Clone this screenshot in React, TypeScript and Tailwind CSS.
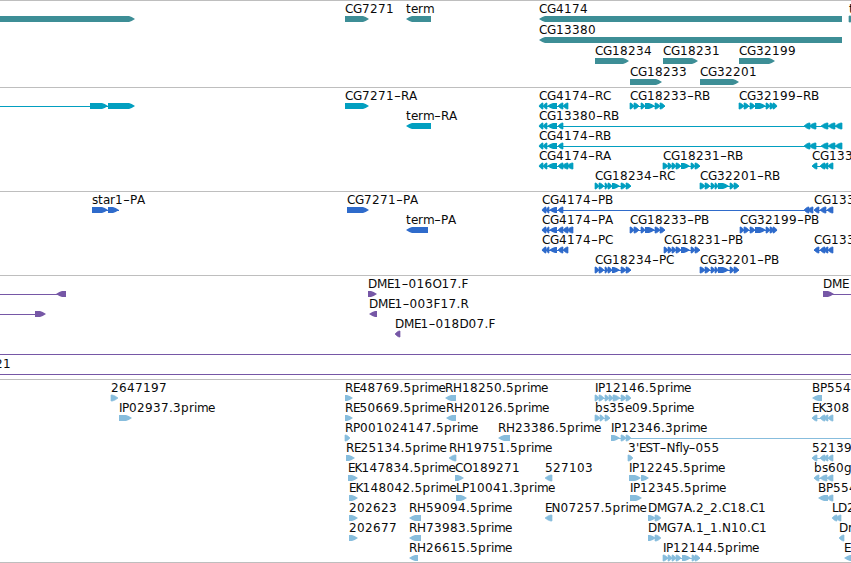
type Exon = [start: number, end: number];

type Feature = {
  row: number;
  exons: Exon[];
  dir: "left" | "right";
  label?: string;
  labelX?: number;
  // intron line, when the feature is more than a single block
  line?: Exon;
};

type Track = {
  name: string;
  color: string;
  height: number;
  rowHeight: number;
  features: Feature[];
};

const WIDTH = 851;

// Glyph advances for the 12px label font
const ADVANCE: Record<string, number> = {
  C: 8, G: 9, R: 8, B: 8, A: 8, P: 7, D: 9, M: 10, E: 6.6, F: 7, H: 9, I: 3,
  K: 7, L: 6, N: 9, O: 9, S: 7, T: 7, "-": 7, ".": 4, "'": 3, _: 6,
  s: 6, t: 5, a: 7, r: 5, e: 7, m: 11, p: 8, i: 3, f: 4, l: 3, y: 6, b: 8, g: 8,
};

type Run = { text: string; positions: string };

// Hyphens get a run of their own, so that they can be stretched over their cell
function splitRuns(label: string, x: number): Run[] {
  const runs: Run[] = [];
  let pen = x;
  for (const part of label.split(/(-)/)) {
    const positions: number[] = [];
    for (const char of part) {
      positions.push(pen);
      pen += ADVANCE[char] ?? 8;
    }
    runs.push({ text: part, positions: positions.join(" ") });
  }
  return runs;
}

function right(row: number, exons: Exon[], label?: string, line?: Exon): Feature {
  return { row, exons, dir: "right", label, line };
}

function left(row: number, exons: Exon[], label?: string, line?: Exon): Feature {
  return { row, exons, dir: "left", label, line };
}

const cg18233: Exon[] = [[630, 634], [634, 639], [641, 645], [645, 655], [655, 660], [660, 665]];
const cg18234: Exon[] = [[595, 599], [599, 604], [605, 608], [608, 612], [612, 620], [621, 626], [626, 631]];
const cg18231: Exon[] = [[663, 668], [668, 672], [672, 676], [676, 681], [681, 690], [691, 695], [695, 700]];
const cg32201: Exon[] = [[700, 705], [705, 710], [711, 715], [715, 718], [718, 729], [730, 734], [734, 739]];
const cg32199: Exon[] = [[739, 744], [744, 749], [750, 755], [755, 766], [766, 770], [770, 774], [773, 777]];
const cg4174Start: Exon[] = [[539, 543], [543, 547], [547, 557], [558, 563]];
const cg4174End: Exon[] = [[804, 810], [809, 816], [821, 828], [828, 835], [835, 842]];
const cg4174Protein: Exon[] = [[542, 546], [546, 549], [549, 557], [558, 563]];
const cg13380End: Exon[] = [[812, 817], [820, 825], [824, 828], [828, 833]];

const tracks: Track[] = [
  {
    name: "genes",
    color: "#3d8e96",
    height: 87,
    rowHeight: 21,
    features: [
      right(0, [[-10, 135]]),
      right(0, [[345, 369]], "CG7271"),
      left(0, [[406, 431]], "term"),
      left(0, [[539, 842]], "CG4174"),
      right(0, [[849, 856]], "t"),
      left(1, [[539, 842]], "CG13380"),
      right(2, [[595, 629]], "CG18234"),
      right(2, [[663, 698]], "CG18231"),
      right(2, [[739, 775]], "CG32199"),
      right(3, [[630, 662]], "CG18233"),
      right(3, [[700, 739]], "CG32201"),
    ],
  },
  {
    name: "transcripts",
    color: "#029fc0",
    height: 104,
    rowHeight: 20,
    features: [
      right(0, [[90, 108], [108, 135]], undefined, [0, 110]),
      right(0, [[345, 369]], "CG7271-RA"),
      left(1, [[406, 431]], "term-RA"),
      left(0, [...cg4174Start, [563, 568]], "CG4174-RC", [539, 568]),
      right(0, cg18233, "CG18233-RB", [630, 665]),
      right(0, cg32199, "CG32199-RB", [739, 777]),
      left(1, [...cg4174Start, ...cg4174End], "CG13380-RB", [539, 842]),
      left(2, [...cg4174Start, ...cg4174End], "CG4174-RB", [539, 842]),
      left(3, [...cg4174Start, [562, 568], [567, 573]], "CG4174-RA", [539, 573]),
      right(3, cg18231, "CG18231-RB", [663, 700]),
      left(3, cg13380End, "CG133", [812, 833]),
      right(4, cg18234, "CG18234-RC", [595, 631]),
      right(4, cg32201, "CG32201-RB", [700, 739]),
    ],
  },
  {
    name: "proteins",
    color: "#2f6bcb",
    height: 84,
    rowHeight: 20,
    features: [
      right(0, [[92, 108], [108, 119]], "star1-PA", [92, 119]),
      right(0, [[347, 369]], "CG7271-PA"),
      left(1, [[406, 428]], "term-PA"),
      left(0, [...cg4174Protein, [804, 809], [808, 813]], "CG4174-PB", [542, 813]),
      left(0, [[814, 819], [820, 826], [827, 833]], "CG133", [814, 833]),
      left(1, [...cg4174Protein, [563, 568], [567, 573]], "CG4174-PA", [542, 573]),
      right(1, cg18233, "CG18233-PB", [630, 665]),
      right(1, [[740, 744], ...cg32199.slice(1)], "CG32199-PB", [740, 777]),
      left(2, [...cg4174Protein, [563, 568]], "CG4174-PC", [542, 568]),
      right(2, [[664, 668], ...cg18231.slice(1)], "CG18231-PB", [664, 700]),
      left(2, [[814, 819], [820, 825], [824, 828], [828, 833]], "CG133", [814, 833]),
      right(3, cg18234, "CG18234-PC", [595, 631]),
      right(3, cg32201, "CG32201-PB", [700, 739]),
    ],
  },
  {
    name: "clones",
    color: "#7657a6",
    height: 104,
    rowHeight: 20,
    features: [
      left(0, [[56, 66]], undefined, [0, 60]),
      right(1, [[35, 46]], undefined, [0, 40]),
      right(0, [[368, 377]], "DME1-016O17.F"),
      left(1, [[369, 377]], "DME1-003F17.R"),
      left(2, [[395, 400]], "DME1-018D07.F"),
      right(0, [[823, 834]], "DME", [823, 851]),
      right(3, [], undefined, [0, 851]),
      { row: 4, exons: [], dir: "right", label: "21", labelX: -5, line: [0, 851] },
    ],
  },
  {
    name: "ests",
    color: "#87bddd",
    height: 183,
    rowHeight: 20,
    features: [
      right(0, [[111, 118]], "2647197"),
      right(1, [[119, 132]], "IP02937.3prime"),
      right(0, [[345, 353]], "RE48769.5prime"),
      right(1, [[345, 353]], "RE50669.5prime"),
      right(2, [[345, 350]], "RP001024147.5prime"),
      right(3, [[346, 355]], "RE25134.5prime"),
      right(4, [[348, 358]], "EK147834.5prime"),
      right(5, [[349, 358]], "EK148042.5prime"),
      right(6, [[349, 358]], "202623"),
      right(7, [[349, 358]], "202677"),
      left(0, [[445, 456]], "RH18250.5prime"),
      left(1, [[446, 456]], "RH20126.5prime"),
      left(2, [[498, 510]], "RH23386.5prime"),
      left(3, [[449, 456]], "RH19751.5prime"),
      right(4, [[455, 464]], "CO189271"),
      right(5, [[456, 467]], "LP10041.3prime"),
      left(6, [[409, 421]], "RH59094.5prime"),
      left(7, [[409, 421]], "RH73983.5prime"),
      left(8, [[409, 418]], "RH26615.5prime"),
      left(4, [[545, 552]], "527103"),
      left(6, [[545, 552]], "EN07257.5prime"),
      right(0, [[595, 599], [599, 604], [605, 609], [609, 613], [613, 620], [621, 626], [626, 631]], "IP12146.5prime", [595, 631]),
      right(1, [[595, 600], [600, 604], [605, 610]], "bs35e09.5prime", [595, 610]),
      right(2, [[611, 620], [621, 626], [626, 631]], "IP12346.3prime", [611, 851]),
      right(3, [[628, 633]], "3'EST-Nfly-055"),
      right(4, [[629, 641], [641, 649]], "IP12245.5prime"),
      right(5, [[630, 642]], "IP12345.5prime"),
      right(6, [[648, 656], [655, 661]], "DMG7A.2_2.C18.C1"),
      right(7, [[648, 656], [655, 661]], "DMG7A.1_1.N10.C1"),
      right(8, [[663, 668], [668, 672], [672, 676], [676, 681], [682, 691], [692, 696], [695, 700]], "IP12144.5prime", [663, 700]),
      left(0, [[812, 822]], "BP554"),
      left(1, [[812, 817], [820, 825], [824, 828], [828, 833]], "EK308", [812, 833]),
      left(3, [[812, 817], [820, 825], [824, 828], [828, 833]], "52139", [812, 833]),
      left(4, [[814, 819], [820, 827], [827, 833]], "bs60g", [814, 833]),
      left(5, [[818, 828], [827, 833]], "BP554"),
      left(6, [[832, 837], [836, 841]], "LD2"),
      left(7, [[839, 844]], "Dr"),
      left(8, [[844, 856]], "E"),
    ],
  },
];

function exonPoints([start, end]: Exon, dir: Feature["dir"], top: number) {
  const head = Math.min(6, (end - start) * 0.8);
  const neck = head * 0.55;
  const bottom = top + 6;
  const mid = top + 3;
  if (dir === "right") {
    return `${start},${top} ${end - head},${top} ${end - neck},${top + 0.9} ${end},${mid} ${end - neck},${bottom - 0.9} ${end - head},${bottom} ${start},${bottom}`;
  }
  return `${end},${top} ${start + head},${top} ${start + neck},${top + 0.9} ${start},${mid} ${start + neck},${bottom - 0.9} ${start + head},${bottom} ${end},${bottom}`;
}

function Label({ text, x, y }: { text: string; x: number; y: number }) {
  return (
    <text y={y} className="fill-[#0a0a0a]">
      {splitRuns(text, x).map((run, index) =>
        run.text === "-" ? (
          <tspan key={index} x={run.positions} textLength={7} lengthAdjust="spacingAndGlyphs">
            {run.text}
          </tspan>
        ) : (
          <tspan key={index} x={run.positions}>
            {run.text}
          </tspan>
        )
      )}
    </text>
  );
}

function FeatureGlyph({ feature, track }: { feature: Feature; track: Track }) {
  const { row, exons, dir, label, labelX, line } = feature;
  const top = row * track.rowHeight + 16;

  return (
    <g>
      {line && (
        <rect x={line[0]} y={top + 3} width={line[1] - line[0]} height={1} fill={track.color} />
      )}
      {exons.map((exon, index) => (
        <polygon
          key={index}
          points={exonPoints(exon, dir, top)}
          fill={track.color}
          stroke={track.color}
          strokeWidth={exon[1] - exon[0] < 8 ? 0.7 : 0}
        />
      ))}
      {label && <Label text={label} x={labelX ?? exons[0][0]} y={top - 3} />}
    </g>
  );
}

function TrackPanel({ track }: { track: Track }) {
  return (
    <section aria-label={track.name} className="w-full shrink-0">
      <svg width={WIDTH} height={track.height} className="block font-['DejaVu_Sans',sans-serif] text-[12px]">
        <rect width={WIDTH} height={1} className="fill-[#bebebe]" />
        {track.features.map((feature, index) => (
          <FeatureGlyph key={index} feature={feature} track={track} />
        ))}
      </svg>
    </section>
  );
}

export default function App() {
  return (
    <main className="flex h-[563px] w-[851px] flex-col overflow-hidden bg-white">
      {tracks.map((track) => (
        <TrackPanel key={track.name} track={track} />
      ))}
      <div className="h-px w-full shrink-0 bg-[#bebebe]" />
    </main>
  );
}
